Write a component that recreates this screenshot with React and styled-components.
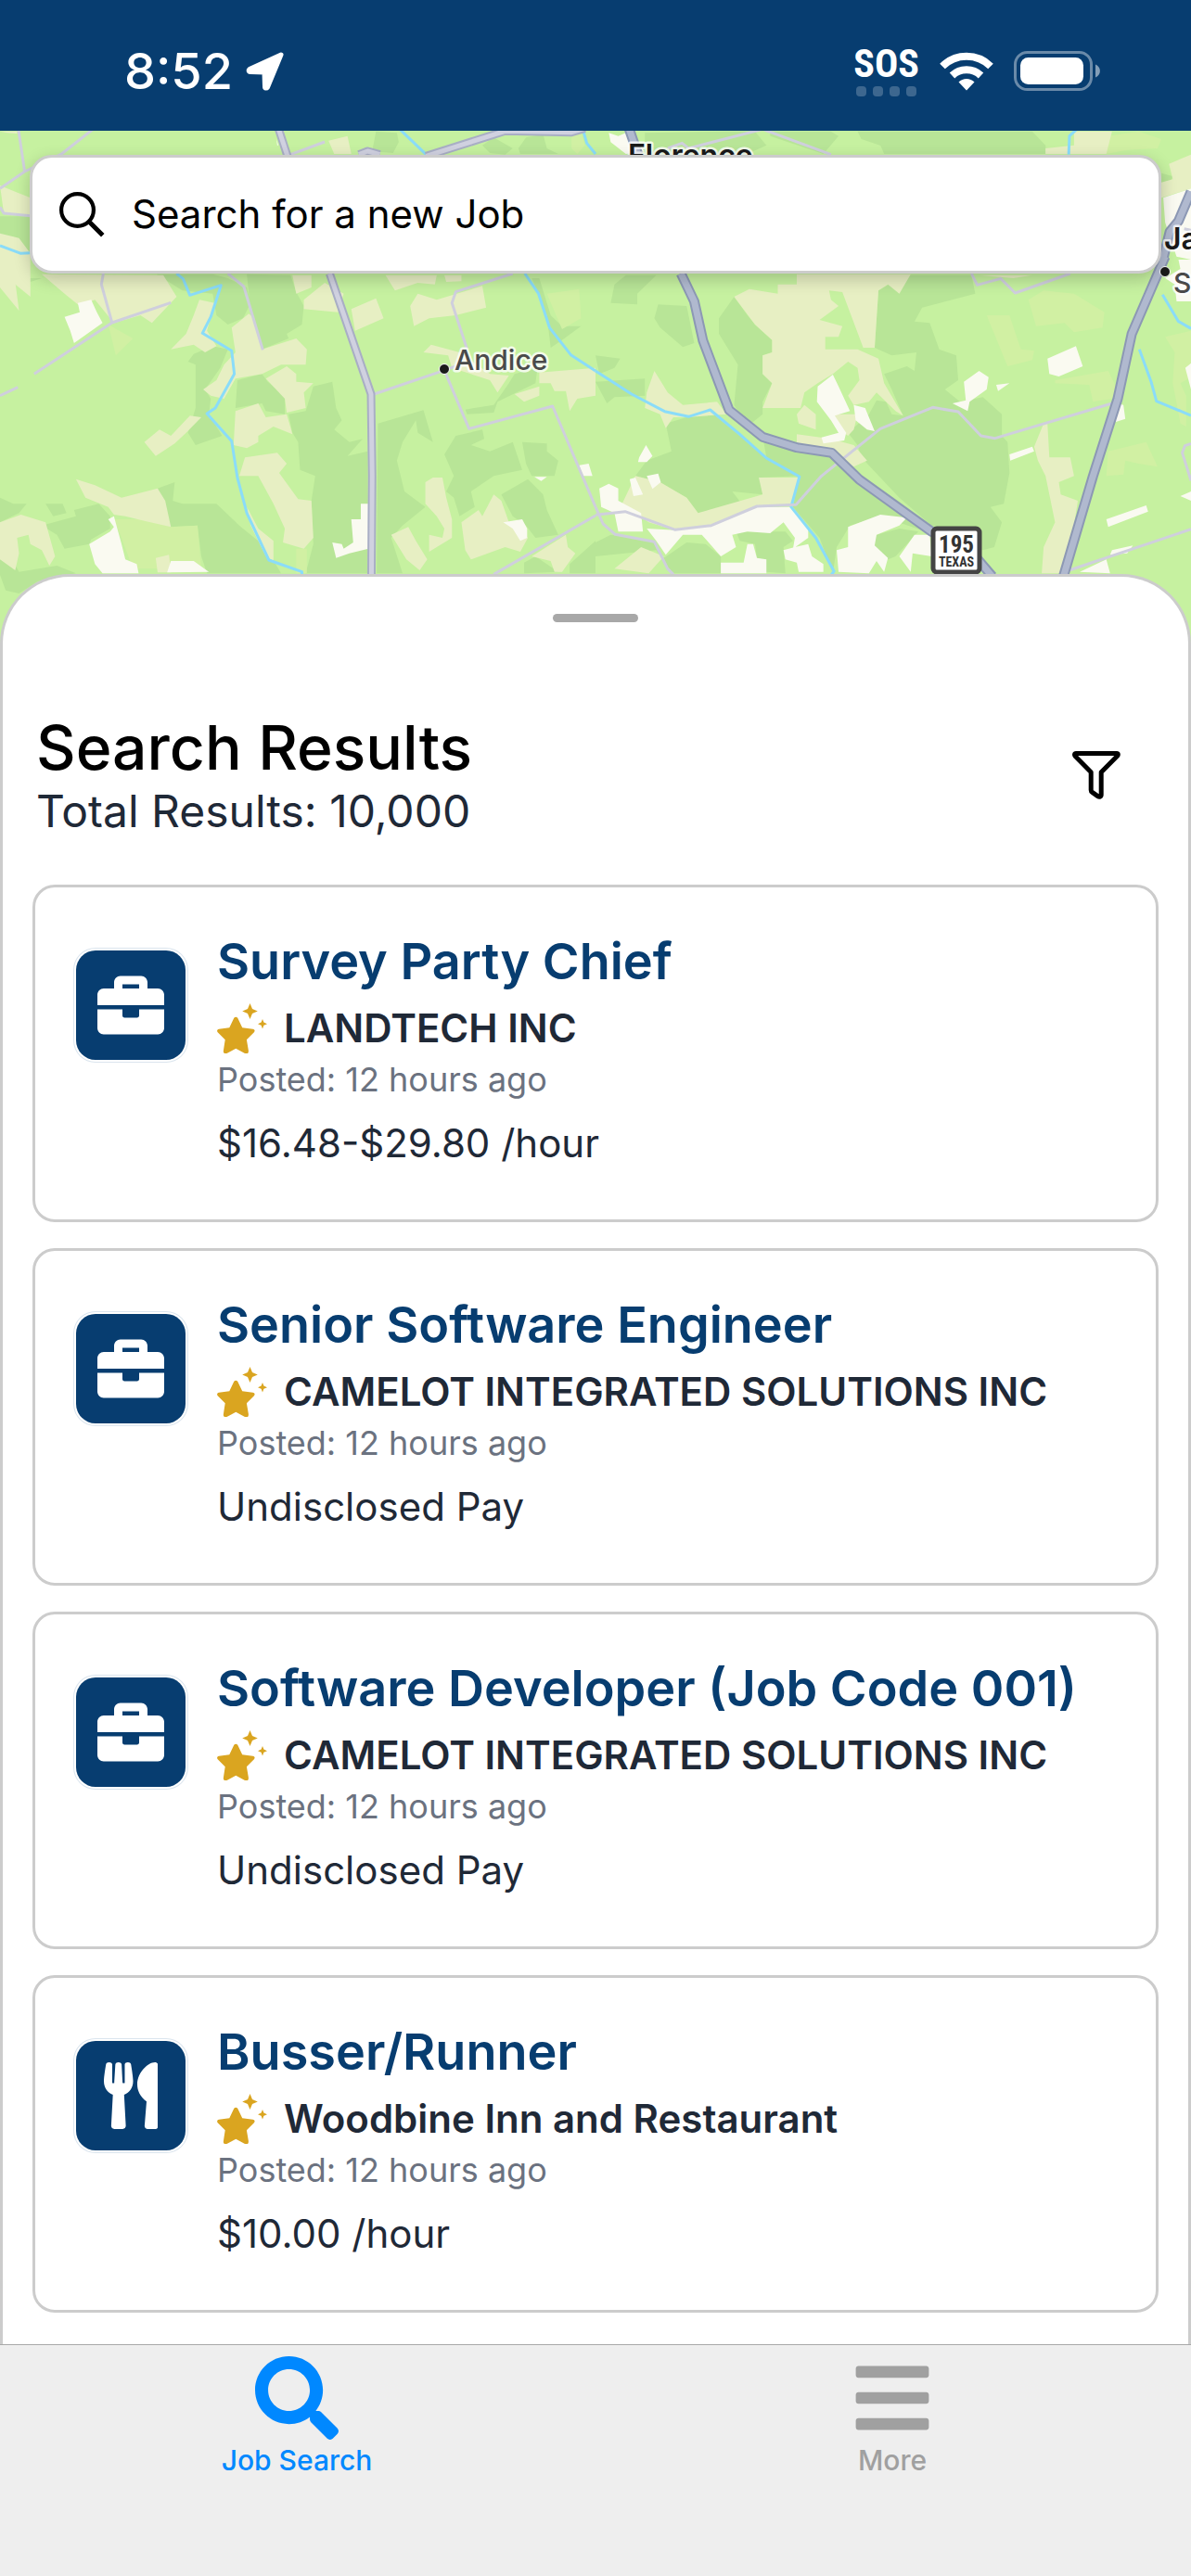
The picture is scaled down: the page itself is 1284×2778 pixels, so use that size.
import React from "react";
import styled, { createGlobalStyle, css } from "styled-components";
import { FaSearch, FaBars } from "react-icons/fa";

const GlobalStyle = createGlobalStyle`
  * {
    box-sizing: border-box;
  }

  body {
    margin: 0;
    background: #ffffff;
    font-family: Inter, "Liberation Sans", sans-serif;
  }

  h1, h2, p, ul {
    margin: 0;
    padding: 0;
  }
`;

const colors = {
  navy: "#073d70",
  border: "#cccccc",
  text: "#1f2937",
  muted: "#6b7280",
  gold: "#daa520",
  active: "#0088ff",
  inactive: "#a0a0a0"
};

const Screen = styled.div`
  display: flex;
  flex-direction: column;
  min-height: 100vh;
`;

const StatusBar = styled.header`
  display: flex;
  align-items: center;
  justify-content: space-between;
  height: 141px;
  padding: 12px 96px 0 134px;
  background: ${colors.navy};
  color: #ffffff;
`;

const StatusGroup = styled.div`
  display: flex;
  align-items: center;
  gap: ${props => props.$gap}px;
`;

const Clock = styled.span`
  font-size: 54px;
  line-height: 64px;
  font-weight: 500;
`;

const Carrier = styled.div`
  display: flex;
  flex-direction: column;
  align-items: center;
  gap: 4px;
`;

const CarrierName = styled.span`
  font-family: "Roboto Condensed", Roboto, sans-serif;
  font-size: 42px;
  line-height: 40px;
  font-weight: 700;
`;

const SignalDots = styled.div`
  display: flex;
  gap: 7px;

  & > i {
    width: 11px;
    height: 11px;
    border-radius: 4px;
    background: rgba(255, 255, 255, 0.22);
  }
`;

const MapArea = styled.section`
  position: relative;
  height: 560px;
  padding: 26px 32px;
  background: #c6f1a0;
`;

const MapSvg = styled.svg`
  position: absolute;
  inset: 0;
  width: 100%;
  height: 100%;
`;

const SearchBox = styled.label`
  position: relative;
  display: flex;
  align-items: center;
  gap: 29px;
  height: 128px;
  padding: 0 29px;
  border: 3px solid ${colors.border};
  border-radius: 24px;
  background: #ffffff;
  box-shadow: 0 6px 18px rgba(0, 0, 0, 0.2);
`;

const SearchInput = styled.input`
  flex: 1;
  min-width: 0;
  padding: 0;
  border: 0;
  outline: 0;
  background: transparent;
  color: #000000;
  font: 400 42px/52px Inter, "Liberation Sans", sans-serif;

  &::placeholder {
    color: #000000;
    opacity: 1;
  }
`;

const Sheet = styled.main`
  position: relative;
  flex: 1;
  display: flex;
  flex-direction: column;
  margin-top: -82px;
  padding: 40px 32px 34px;
  border: 3px solid ${colors.border};
  border-bottom: 0;
  border-radius: 75px 75px 0 0;
  background: #ffffff;
`;

const Handle = styled.div`
  align-self: center;
  width: 92px;
  height: 9px;
  border-radius: 5px;
  background: #a8a8a8;
`;

const SheetHeader = styled.div`
  display: flex;
  align-items: center;
  justify-content: space-between;
  margin-top: 96px;
  padding: 0 41px 0 4px;
`;

const Title = styled.h1`
  font-size: 66px;
  line-height: 78px;
  font-weight: 500;
  color: #000000;
`;

const Total = styled.p`
  font-size: 48px;
  line-height: 60px;
  color: ${colors.text};
`;

const IconButton = styled.button`
  display: flex;
  padding: 0;
  border: 0;
  background: none;
  color: #000000;
  cursor: pointer;
`;

const JobList = styled.ul`
  display: flex;
  flex-direction: column;
  gap: 28px;
  margin-top: 49px;
  list-style: none;
`;

const JobCard = styled.li`
  display: flex;
  align-items: flex-start;
  gap: 34px;
  height: 364px;
  padding: 44px;
  border: 3px solid ${colors.border};
  border-radius: 24px;
`;

const CategoryTile = styled.div`
  display: flex;
  flex: none;
  align-items: center;
  justify-content: center;
  width: 118px;
  height: 118px;
  margin-top: 24px;
  border-radius: 21px;
  background: ${colors.navy};
  box-shadow: 0 0 0 2px #ffffff, 0 0 0 3px #dbe5ee;
`;

const JobBody = styled.div`
  min-width: 0;
`;

const JobTitle = styled.h2`
  font-size: 54px;
  line-height: 72px;
  font-weight: 600;

  & > a {
    color: ${colors.navy};
    text-decoration: none;
  }
`;

const Company = styled.div`
  display: flex;
  align-items: center;
  gap: 18px;
  font-size: 42px;
  line-height: 72px;
  font-weight: 600;
  color: ${colors.text};
`;

const Posted = styled.p`
  font-size: 36px;
  line-height: 38px;
  color: ${colors.muted};
`;

const Pay = styled.p`
  margin-top: 24px;
  font-size: 42px;
  line-height: 52px;
  color: ${colors.text};
`;

const TabBar = styled.nav`
  display: grid;
  grid-template-columns: 1fr 1fr;
  height: 250px;
  border-top: 1px solid #a8a8a8;
  background: #eeeeee;
`;

const Tab = styled.a`
  display: flex;
  flex-direction: column;
  align-items: center;
  gap: 4px;
  padding: 12px 2px 0 0;
  font-size: 30px;
  line-height: 36px;
  font-weight: 500;
  text-decoration: none;
  color: ${colors.inactive};

  ${props =>
    props.$active &&
    css`
      color: ${colors.active};
    `}
`;

// Land cover is kept per tile, each drawn in the tile's own units
const TILE_X = 642 / 1568;
const TILE_Y = 1 / 3;

const cover = {
  dark: "#b8e597",
  tan: "#e7efc3",
  lime: "#d1f0a3",
  bare: "#fafaf1"
};

const tiles = [
  {
    x: 0,
    y: 280,
    dark:
      "M0,-70 L77,-70 V60 L110,60 L60,80 L0,0Z M412,47 L560,47 L600,60 L650,90 L660,140 L640,190 L600,210 L570,180 L560,110 L480,100Z M650,47 L765,50 L780,105 L800,150 L795,210 L755,240 L760,255 L690,290 L660,170Z M495,330 L510,305 L560,280 L600,290 L580,350 L540,420 L555,450 L550,500 L585,570 L515,600 L495,560 L515,480 L515,340Z M625,390 L690,370 L705,395 L750,440 L750,500 L700,490 L690,465 L620,480Z M825,410 L875,395 L885,480 L900,520 L880,550 L920,590 L955,580 L915,635 L968,620 V1015 H805 L825,920 L820,780 L830,700 L790,680 L785,590 L770,560 L760,500 L805,490Z M415,740 L460,720 L455,780 L480,790 L570,790 L630,860 L700,930 L740,1015 L545,1015 L530,960 L520,860 L445,865Z M110,860 L200,830 L195,810 L260,790 L290,830 L290,870 L240,905 L235,920 L170,935 L150,890Z M0,970 L30,965 L50,1010 L150,990 L200,1015 L100,1040 L50,1080 L15,1070 L0,1020Z M120,790 L165,790 L175,820 L140,830Z M0,770 L35,790 L70,790 L50,820 L0,850Z M995,530 L1115,487 L1140,590 L1100,560 L1095,520 L1060,590 L1045,650 L1065,750 L1120,800 L1060,860 L1030,900 L1060,1015 H992Z M1170,630 L1200,570 L1270,550 L1275,580 L1240,600 L1290,620 L1350,590 L1375,680 L1300,700 L1240,750 L1250,800 L1210,830 L1195,770 L1175,750 L1195,700Z M1375,590 L1440,595 L1440,620 L1470,650 L1460,700 L1400,700 L1385,660Z M1320,760 L1390,710 L1430,760 L1440,810 L1470,890 L1410,900 L1385,860 L1350,830Z M1380,980 L1410,960 L1470,1010 L1380,1015Z M1500,985 L1568,910 V1015 H1500Z M1225,485 L1300,470 L1340,400 L1355,370 L1415,350 L1410,400 L1310,460 L1300,495 L1230,500Z M1400,60 L1420,60 L1450,180 L1480,215 L1530,215 L1480,260 L1450,285 L1440,180Z",
    lime:
      "M300,840 L380,840 L450,865 L520,860 L530,1000 L350,1000 L320,900Z M1440,110 L1525,95 L1530,190 L1480,225Z M285,210 L350,255 L305,310Z M780,935 H808 V1015 H780Z",
    tan:
      "M110,47 L430,50 L465,120 L400,205 L370,180 L300,205 L250,130 L210,150 L170,110Z M0,0 L60,0 L80,60 L40,70 L50,165 L0,90Z M525,130 L565,140 L545,230 L570,280 L540,300 L510,275 L450,290 L490,240 L510,180Z M655,175 L665,185 L690,290 L780,255 L808,290 L805,340 L740,340 L690,370 L620,385 L590,450 L555,440 L535,420 L570,390 L590,340 L620,300 L610,220Z M700,385 L755,345 L780,370 L780,395 L825,400 L800,430 L805,480 L755,495 L750,450Z M620,490 L680,465 L700,510 L755,500 L770,565 L720,540 L680,570 L680,590 L650,610 L615,600Z M645,640 L730,625 L755,660 L735,690 L785,775 L820,780 L825,900 L800,935 L745,915 L750,870 L720,790 L680,700 L630,700Z M650,800 L680,870 L720,910 L720,975 L700,960 L660,860Z M770,50 L820,50 L820,90 L780,110Z M800,130 L855,75 L905,110 L890,170 L800,160Z M925,160 L990,125 L1010,190 L935,230Z M1015,50 L1150,50 L1145,80 L1100,75 L1040,100Z M1080,150 L1100,110 L1150,130 L1270,85 L1280,155 L1200,180 L1130,190 L1090,215Z M1170,50 H1215 V70 L1175,72Z M380,590 L420,550 L450,570 L500,505 L530,510 L490,560 L460,595 L410,635Z M200,710 L250,730 L320,770 L415,740 L435,780 L450,865 L380,845 L330,830 L300,825 L285,800 L225,770Z M0,850 L55,825 L120,850 L145,960 L130,990 L110,940 L80,920 L75,890 L45,900 L50,950 L40,1005 L0,970Z M410,965 L445,955 L450,1012 H415Z M1120,720 L1140,705 L1165,705 L1175,770 L1190,840 L1190,900 L1130,945 L1130,890 L1165,900 L1170,870 L1150,830 L1120,790Z M1215,850 L1260,810 L1270,830 L1300,760 L1320,780 L1340,850 L1390,900 L1370,945 L1330,930 L1240,970 L1225,940Z M1030,890 L1075,865 L1095,910 L1125,970 L1105,1005 L1070,970Z M1115,300 L1135,275 L1210,300 L1290,370 L1340,375 L1310,430 L1290,390 L1190,350 L1180,310Z M1420,365 L1568,350 V440 L1520,450 L1500,490 L1490,425 L1460,425 L1450,400 L1420,400Z M1355,435 L1420,410 L1420,440 L1380,460Z M1400,960 L1490,890 L1495,930 L1515,950 L1480,1010 L1460,1010 L1450,975Z",
    bare:
      "M205,140 L240,130 L255,170 L270,205 L195,270 L185,230 L170,185 L210,170Z M285,840 L300,830 L320,920 L330,970 L360,985 L365,1015 L270,1015 L250,985 L235,920 L290,880 L300,865Z M450,975 L510,975 L550,1010 L440,1012Z M950,790 H970 V935 L920,950 L885,965 L875,915 L900,920 L905,935 L930,915 L925,840 L950,840Z M1325,850 L1375,840 L1388,870 L1388,900 L1370,910 L1350,870Z M1525,665 L1550,660 L1560,700 L1535,700Z M1407,703 H1440 L1425,716Z"
  },
  {
    x: 642,
    y: 280,
    dark:
      "M50,80 L80,50 L160,50 L110,110 L110,145 L40,140Z M165,145 L240,150 L260,270 L230,283 L170,220 L155,190Z M365,120 L400,180 L420,210 L465,260 L465,300 L440,310 L440,370 L465,400 L440,460 L440,500 L400,540 L365,470 L375,340 L355,300 L325,240 L325,190Z M745,100 L780,75 L830,50 L990,50 L1000,110 L860,155 L840,200 L880,205 L905,290 L950,310 L955,390 L920,420 L960,460 L1020,445 L1070,500 L1070,570 L1085,590 L1090,690 L1075,790 L1040,800 L1070,850 L1050,930 L1020,940 L885,860 L800,770 L700,640 L690,600 L665,560 L720,500 L740,455 L765,460 L780,500 L810,505 L780,420 L760,370 L820,345 L840,360 L845,300 L780,310 L735,285Z M0,310 L65,320 L50,350 L10,370Z M0,395 L130,385 L130,440 L50,445 L30,465Z M185,530 L240,510 L300,490 L380,570 L450,645 L535,700 L435,705 L440,760 L360,750 L385,790 L270,820 L240,770 L170,720 L105,700 L135,650 L200,620Z M440,570 L530,620 L625,640 L700,730 L880,890 L870,880 L750,830 L670,860 L635,930 L625,1015 L590,900 L520,800 L535,700 L450,640Z M0,915 L40,890 L150,910 L180,965 L240,915 L290,920 L330,960 L330,1015 L200,1015 L160,940 L0,960Z M370,880 L500,880 L520,910 L495,930 L500,1015 L450,1010 L440,970 L425,965 L420,920 L380,910Z M740,890 L800,870 L850,880 L820,920 L790,960 L770,970 L730,920Z",
    lime:
      "M1140,130 L1180,100 L1260,110 L1340,170 L1335,220 L1260,235 L1235,205 L1160,215Z M1030,180 L1090,180 L1120,290 L1155,295 L1150,325 L1085,345Z M1210,390 L1350,360 L1370,410 L1360,450 L1310,460 L1300,405 L1210,400Z M1350,620 L1450,590 L1480,670 L1430,660 L1395,650 L1390,695 L1345,700Z M1500,250 L1568,230 V380 L1540,400 L1555,440 V540 L1540,530 L1520,400 L1525,300Z",
    tan:
      "M530,47 H830 L800,110 L770,80 L745,100 L735,285 L705,285 L650,105 L615,100 L620,130 L640,150 L590,195 L650,215 L640,250 L605,250 L605,290 L690,290 L745,320 L760,400 L810,505 L790,490 L740,430 L720,460 L680,470 L665,440 L695,390 L690,350 L665,330 L625,370 L585,400 L550,430 L540,480 L440,480 L465,400 L440,370 L440,310 L465,300 L465,260 L420,210 L365,120 L405,95 L480,110 L480,80 L530,80Z M135,430 L155,360 L190,430 L230,470 L320,460 L345,500 L240,510 L205,510 L185,545 L170,500 L130,480Z M530,500 L550,470 L580,500 L580,550 L535,530Z M530,565 L620,580 L680,600 L715,650 L680,670 L630,630 L530,600Z M430,705 L535,705 L520,790 L420,800 L305,860 L210,875 L140,850 L70,790 L105,700 L170,720 L240,770 L270,820 L440,760Z M630,500 L690,500 L680,550 L665,570 L630,540Z M1155,605 L1180,530 L1190,530 L1195,640 L1250,640 L1260,700 L1220,720 L1225,760 L1270,780 L1240,1015 L1175,1015 L1180,930 L1210,850 L1185,700 L1165,650Z M1010,50 L1150,50 L1100,60Z M50,1000 L120,930 L180,960 L140,1015Z",
    bare:
      "M625,372 L640,410 L670,490 L630,505 L660,560 L655,585 L600,595 L595,575 L640,560 L620,520 L583,460 L585,410Z M680,470 L710,480 L735,555 L715,550 L685,520Z M970,395 L1010,360 L1035,380 L1030,420 L985,460 L980,490 L940,465 L975,455Z M1055,405 L1090,400 L1060,425Z M1190,320 L1265,280 L1283,345 L1220,378 L1195,370Z M1090,630 L1150,605 L1155,620 L1092,650Z M1345,840 L1450,795 L1455,815 L1350,865Z M1360,460 L1390,470 L1395,515 L1370,525Z M115,640 L133,600 L150,635 L135,655 L112,655Z M10,740 L35,725 L60,740 L60,780 L120,820 L125,880 L60,880 L50,820 L15,800Z M90,710 L105,705 L125,760 L100,765Z M135,700 L165,692 L172,720 L150,742Z M135,870 L210,875 L305,860 L425,800 L515,800 L560,870 L560,900 L520,935 L525,900 L495,850 L460,885 L400,880 L360,890 L370,930 L330,960 L280,890 L230,890 L185,955 L160,910Z M400,920 L415,920 L425,965 L450,970 L450,1015 L330,1015 L330,980 L390,980Z M495,940 L525,930 L560,920 L570,960 L600,985 L600,1010 L535,1010 L530,980 L500,970Z M665,865 L750,825 L820,835 L800,860 L740,890 L735,925 L770,965 L760,1010 L740,975 L720,1015 L640,1010 L635,940 L665,930Z M880,890 L885,960 L835,950 L830,1010 L800,960 L840,890Z M1275,1010 L1345,970 L1355,1015Z M1360,940 L1415,925 L1400,950 L1355,955Z M1535,0 H1568 V135 L1530,135 L1525,80 L1500,60 L1540,30Z M1540,765 L1568,750 V780Z M1553,350 L1568,335 V420Z"
  },
  {
    x: 0,
    y: 0,
    dark:
      "M990,425 L1045,430 L1050,460 L1035,495 L980,490Z M1270,470 L1300,445 L1350,480 L1330,500 L1290,495Z M1365,480 L1385,445 L1430,435 L1440,480 L1470,498 L1370,498Z M0,700 L80,700 V900 L0,760Z",
    lime: "M1505,440 L1530,425 L1540,470 L1520,498 L1505,480Z",
    tan:
      "M0,600 L40,620 L80,640 V697 L10,690Z M865,455 L915,440 L925,498 L880,498Z M0,755 L50,770 L80,820 V960 L0,880Z M0,425 H45 V432 L20,430Z",
    bare: "M728,450 L733,470 L730,470Z"
  },
  {
    x: 642,
    y: 0,
    dark:
      "M130,430 L350,425 L420,425 L450,470 L400,498 L130,498Z M460,425 L620,425 L640,440 L600,498 L460,440Z M690,425 H1150 L1185,470 V498 H760 L740,440 L760,475 L700,450Z M1490,560 L1520,570 L1510,600 L1490,590Z",
    lime: "M1350,440 L1430,425 L1490,450 L1480,480 L1400,485 L1345,498Z",
    tan:
      "M1185,480 L1260,470 L1260,425 H1360 L1345,498 H1185Z M1510,530 L1568,500 V610 L1490,640 V590 L1520,580Z",
    bare:
      "M35,430 L60,440 L80,430 L130,490 L80,498 L40,460Z M1495,640 L1568,610 V840 L1530,830 L1500,720Z"
  }
];

const water = [
  [0, 280, "M465,45 L482,62 L500,115 L582,83 L555,185 L533,238 L610,295 L617,370 L567,480 L545,498 L610,587 L625,705 L650,820 L708,972 L795,1010 V1040 M1382,45 L1418,110 L1447,220 L1503,308 L1568,360"],
  [642, 280, "M0,360 L95,435 L182,491 L245,508 L302,486 L380,565 L450,642 L537,702 L515,800 L580,900 L628,1008 L615,1030 M1493,113 L1535,200 L1568,223 M1432,290 L1463,395 L1477,458 L1568,504"],
  [0, 0, "M1050,415 L1122,500 M1535,420 L1545,463 L1568,498 M0,795 L55,820 L80,818"],
  [642, 0, "M1270,415 L1248,440 L1246,500"]
];

const lanes = [
  [0, 280, "M272,45 L267,80 L295,204 L90,370 M295,204 L450,139 M0,440 L47,413 M600,45 L642,87 L692,292 M985,435 L1170,358 L1235,547 L1455,474 L1568,800 M1350,45 L1200,104 L1190,140 L1230,290 M1170,358 L1210,340 M1300,1018 L1568,828"],
  [642, 280, "M0,826 L78,815 L210,874 L305,860 L425,798 L528,793 L595,700 L750,547 L888,478 L955,492 L1015,570 L1052,578 L1360,465 M0,800 L20,855 L52,889 L155,913 L190,1000 L205,1018 M990,45 L1005,82 L1067,61 L1105,108 L1250,45 M1240,1008 L1568,872 M1568,595 L1552,602 L1545,625 L1568,715"],
  [0, 0, "M48,415 L65,555 L162,498 L245,418 M0,610 L65,555 M0,670 L10,690 L80,698 M765,500 L855,459"],
  [642, 0, "M190,480 L228,463 L245,480 L440,418 L620,500 M1550,740 L1568,745"]
];

const roads = [
  [0, 280, "M868,45 L977,435 L980,700 L978,1030"],
  [0, 0, "M733,415 L757,505 M945,500 L968,489 L1000,500 M1122,505 L1330,424 L1505,428 L1540,415"]
];

const highways = [
  [642, 280, "M225,45 L260,135 L283,262 L352,487 L440,574 L530,608 L622,625 L695,712 L885,880 L1000,960 L1045,1025 M1500,-10 L1412,240 L1375,450 L1310,700 L1232,1025"],
  [642, 0, "M88,415 L112,500 M1568,620 L1535,715 L1512,750 L1492,850"]
];

function Lines({ data, color, width }) {
  return data.map(([x, y, d]) => (
    <path
      key={`${x}-${y}`}
      d={d}
      transform={`translate(${x} ${y}) scale(${TILE_X} ${TILE_Y})`}
      fill="none"
      stroke={color}
      strokeWidth={width}
      strokeLinejoin="round"
      vectorEffect="non-scaling-stroke"
    />
  ));
}

const MapLabel = styled.text`
  font-family: Inter, "Liberation Sans", sans-serif;
  font-size: ${props => (props.$town ? 32 : 30)}px;
  font-weight: ${props => (props.$town ? 600 : 500)};
  fill: ${props => (props.$town ? "#1a1a1a" : "#4a4a4a")};
  stroke: rgba(255, 255, 255, 0.8);
  stroke-width: 5px;
  stroke-linejoin: round;
  paint-order: stroke;
`;

const ShieldText = styled.text`
  font-family: "Roboto Condensed", Roboto, sans-serif;
  font-size: ${props => props.$size}px;
  font-weight: 700;
  text-anchor: middle;
  fill: #333333;
`;

function MapView() {
  return (
    <MapSvg viewBox="0 141 1284 560" preserveAspectRatio="xMidYMin slice" aria-label="Map">
      {tiles.map(tile => (
        <g
          key={`${tile.x}-${tile.y}`}
          transform={`translate(${tile.x} ${tile.y}) scale(${TILE_X} ${TILE_Y})`}
        >
          <path d={tile.dark} fill={cover.dark} />
          <path d={tile.lime} fill={cover.lime} />
          <path d={tile.tan} fill={cover.tan} />
          <path d={tile.bare} fill={cover.bare} />
        </g>
      ))}
      <Lines data={water} color="#8adcf9" width={3} />
      <Lines data={lanes} color="#cfcfdd" width={3} />
      <Lines data={roads} color="#a9aec5" width={9} />
      <Lines data={roads} color="#d0d1e0" width={5} />
      <Lines data={highways} color="#8c98b4" width={11} />
      <Lines data={highways} color="#b0b9cf" width={7} />
      <g fill="#1a1a1a" stroke="#ffffff" strokeWidth="1">
        <circle cx="479" cy="398" r="5.500" />
        <circle cx="1256" cy="293" r="5.500" />
      </g>
      <MapLabel $town x="677" y="179">Florence</MapLabel>
      <MapLabel x="490" y="399">Andice</MapLabel>
      <MapLabel $town x="1255" y="269">Ja</MapLabel>
      <MapLabel x="1265" y="316">S</MapLabel>
      <rect x="1006" y="570" width="50" height="47" rx="4" fill="#ffffff" stroke="#444444" strokeWidth="5" />
      <ShieldText $size={25} x="1031" y="596">195</ShieldText>
      <ShieldText $size={14} x="1031" y="611">TEXAS</ShieldText>
    </MapSvg>
  );
}

function LocationArrow() {
  return (
    <svg width="42" height="43" viewBox="0 0 42 43" aria-hidden="true">
      <path
        d="M38 4 L4 19.500 C2.500 20.500 3 22.500 4.500 22.500 L20 23 L20.500 38.500 C20.500 40.500 22.500 40.500 23.500 39 Z"
        fill="#ffffff"
        stroke="#ffffff"
        strokeWidth="5"
        strokeLinejoin="round"
      />
    </svg>
  );
}

function WifiIcon() {
  return (
    <svg width="58" height="42" viewBox="0 0 58 42" aria-hidden="true">
      <g fill="none" stroke="#ffffff" strokeWidth="8">
        <path d="M3 15.500 A37 37 0 0 1 55 15.500" />
        <path d="M13.500 25.500 A22.500 22.500 0 0 1 44.500 25.500" />
      </g>
      <path d="M20.500 32.500 A12 12 0 0 1 37.500 32.500 L29 41.500 Z" fill="#ffffff" />
    </svg>
  );
}

function BatteryIcon() {
  return (
    <svg width="95" height="44" viewBox="0 0 95 44" aria-hidden="true">
      <rect x="1.500" y="1.500" width="82" height="40" rx="13" fill="none" stroke="#ffffff" strokeOpacity="0.4" strokeWidth="3" />
      <rect x="7" y="7" width="68" height="29" rx="8.500" fill="#ffffff" />
      <path d="M88 14.500 C94.500 17 94.500 26 88 28.500 Z" fill="#ffffff" fillOpacity="0.5" />
    </svg>
  );
}

function LensIcon() {
  return (
    <svg width="49" height="49" viewBox="0 0 49 49" aria-hidden="true">
      <circle cx="19.500" cy="19.500" r="17.400" fill="none" stroke="#000000" strokeWidth="4.200" />
      <path d="M31 34.500 L34.500 31 L48.500 45 L45 48.500 Z" fill="#000000" />
    </svg>
  );
}

function FunnelIcon() {
  return (
    <svg width="52" height="52" viewBox="0 0 52 52" aria-hidden="true">
      <path
        d="M4 2.500 H48 C49.500 2.500 49.600 4 48.800 5 L31.200 22.700 V47 C31.200 49.200 29.200 49.800 27.500 48.600 L21.500 44.400 C20.600 43.800 20.200 43.200 20.200 42 V22.700 L3.200 5.500 C2 4.200 2.500 2.500 4 2.500 Z"
        fill="none"
        stroke="#000000"
        strokeWidth="5"
        strokeLinejoin="round"
      />
    </svg>
  );
}

function SparkleStar() {
  return (
    <svg width="54" height="54" viewBox="0 0 54 54" fill={colors.gold} aria-hidden="true">
      <path d="M18.300 15.800 C19.300 14.300 21.200 14.300 22.200 15.800 L27.200 26.200 L38.600 27.700 C40.700 28.100 41.200 29.800 39.900 31.200 L31.900 39.200 L33.900 51 C34 52.500 33.500 54 32.500 54 L30 54 L20.300 48.800 L10.500 54 L8.500 54 C7 54 6.700 52.500 6.900 51 L8.700 39.200 L0.700 31.200 C-0.500 29.800 0.200 28.100 2 27.700 L13.300 26.200 Z" />
      <path d="M35.500 0 L38 6 L43.800 8.500 L38 11 L35.500 17 L33 11 L27.200 8.500 L33 6 Z" />
      <path d="M49 17 L50.400 20.600 L54 22.200 L50.400 23.800 L49 27.400 L47.600 23.800 L44 22.200 L47.600 20.600 Z" />
    </svg>
  );
}

const categoryPaths = {
  briefcase: {
    width: 512,
    d: "M320 336c0 8.840-7.160 16-16 16h-96c-8.840 0-16-7.160-16-16v-48H0v144c0 25.600 22.400 48 48 48h416c25.600 0 48-22.400 48-48V288H320v48zm144-208h-80V80c0-25.600-22.400-48-48-48H176c-25.600 0-48 22.400-48 48v48H48c-25.600 0-48 22.400-48 48v80h512v-80c0-25.600-22.400-48-48-48zm-144 0H192V96h128v32z"
  },
  food: {
    width: 416,
    d: "M207.900 15.200c.8 4.700 16.100 94.500 16.100 128.800 0 52.300-27.800 89.600-68.900 104.600L168 486.700c.7 13.700-10.200 25.300-24 25.300H80c-13.700 0-24.700-11.500-24-25.300l12.900-238.100C27.700 233.600 0 196.200 0 144 0 109.600 15.300 19.900 16.100 15.200 19.300-5.100 61.400-5.400 64 16.300v141.200c1.300 3.400 15.100 3.200 16 0 1.400-25.300 7.900-139.200 8-141.800 3.300-20.800 44.700-20.800 47.900 0 .2 2.700 6.600 116.500 8 141.800.9 3.200 14.800 3.400 16 0V16.300c2.600-21.600 44.800-21.400 48-1.100zm119.200 285.700l-15 185.100c-1.200 14 9.900 26 23.900 26h56c13.300 0 24-10.700 24-24V24c0-13.200-10.700-24-24-24-82.500 0-221.400 178.500-64.900 300.900z"
  }
};

function CategoryIcon({ name }) {
  const icon = categoryPaths[name];
  return (
    <svg height="72" viewBox={`0 0 ${icon.width} 512`} aria-hidden="true">
      <path d={icon.d} fill="#ffffff" />
    </svg>
  );
}

const jobs = [
  { id: 1, icon: "briefcase", title: "Survey Party Chief", company: "LANDTECH INC", pay: "$16.48-$29.80 /hour" },
  { id: 2, icon: "briefcase", title: "Senior Software Engineer", company: "CAMELOT INTEGRATED SOLUTIONS INC", pay: "Undisclosed Pay" },
  { id: 3, icon: "briefcase", title: "Software Developer (Job Code 001)", company: "CAMELOT INTEGRATED SOLUTIONS INC", pay: "Undisclosed Pay" },
  { id: 4, icon: "food", title: "Busser/Runner", company: "Woodbine Inn and Restaurant", pay: "$10.00 /hour" }
];

function Job({ job }) {
  return (
    <JobCard>
      <CategoryTile>
        <CategoryIcon name={job.icon} />
      </CategoryTile>
      <JobBody>
        <JobTitle>
          <a href={`#job-${job.id}`}>{job.title}</a>
        </JobTitle>
        <Company>
          <SparkleStar />
          {job.company}
        </Company>
        <Posted>Posted: 12 hours ago</Posted>
        <Pay>{job.pay}</Pay>
      </JobBody>
    </JobCard>
  );
}

class App extends React.Component {
  render() {
    return (
      <Screen>
        <GlobalStyle />
        <StatusBar>
          <StatusGroup $gap={14}>
            <Clock>8:52</Clock>
            <LocationArrow />
          </StatusGroup>
          <StatusGroup $gap={22}>
            <Carrier>
              <CarrierName>SOS</CarrierName>
              <SignalDots>
                <i />
                <i />
                <i />
                <i />
              </SignalDots>
            </Carrier>
            <WifiIcon />
            <BatteryIcon />
          </StatusGroup>
        </StatusBar>
        <MapArea>
          <MapView />
          <SearchBox>
            <LensIcon />
            <SearchInput type="text" aria-label="Search for a new Job" placeholder="Search for a new Job" />
          </SearchBox>
        </MapArea>
        <Sheet>
          <Handle />
          <SheetHeader>
            <div>
              <Title>Search Results</Title>
              <Total>Total Results: 10,000</Total>
            </div>
            <IconButton type="button" aria-label="Filter results">
              <FunnelIcon />
            </IconButton>
          </SheetHeader>
          <JobList>
            {jobs.map(job => (
              <Job key={job.id} job={job} />
            ))}
          </JobList>
        </Sheet>
        <TabBar>
          <Tab href="#search" $active>
            <FaSearch size={90} />
            Job Search
          </Tab>
          <Tab href="#more">
            <FaBars size={90} />
            More
          </Tab>
        </TabBar>
      </Screen>
    );
  }
}

export default App;
